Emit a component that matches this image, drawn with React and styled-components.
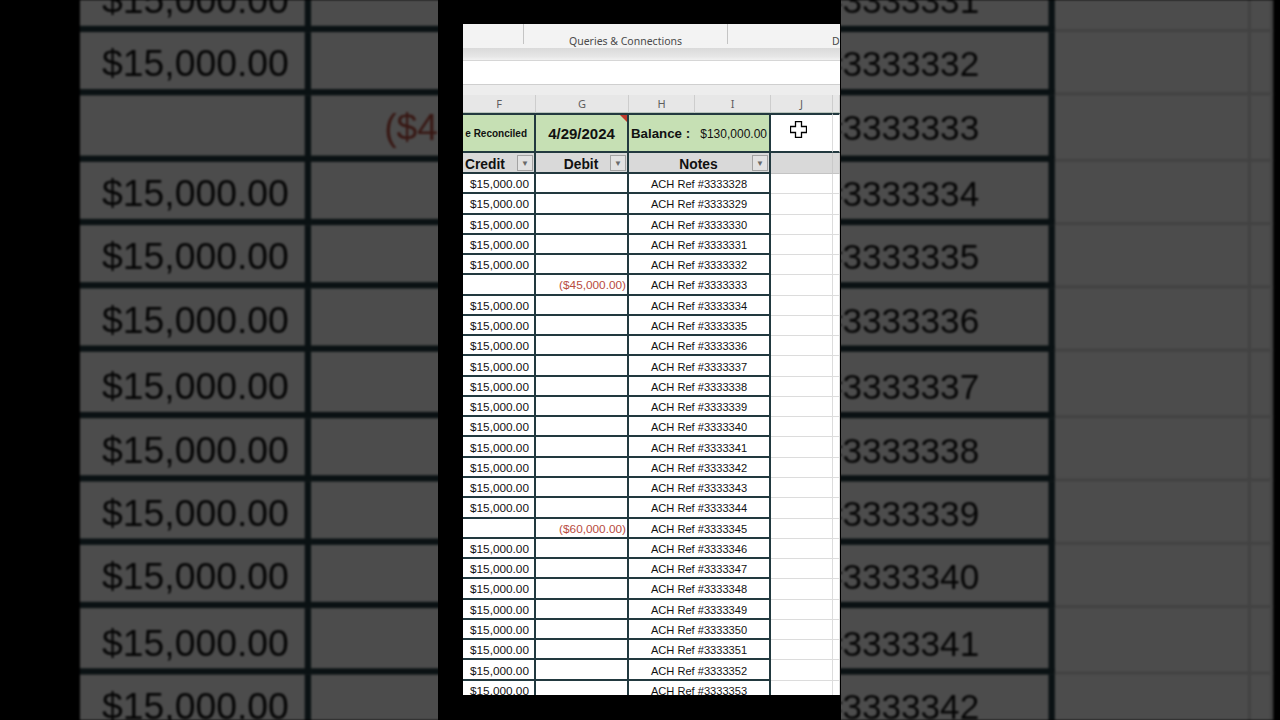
import styled, { createGlobalStyle } from 'styled-components'

const INK = '#22393f'
const GREEN = '#c6e0b4'
const GRID = '#dcdcdc'
const COLS = '73px 93px 66px 76px 62px 7px'

const GlobalStyle = createGlobalStyle`
  html, body {
    margin: 0;
    background: #000;
  }
  * {
    box-sizing: border-box;
  }
`

const Stage = styled.div`
  display: grid;
  width: 1280px;
  height: 720px;
  overflow: hidden;
  background: #000;
`

// blurred, darkened close-up of the same sheet behind the portrait frame
const BackdropLayer = styled.div`
  grid-area: 1 / 1;
  overflow: hidden;
  filter: brightness(0.3) blur(1.2px);
`

const Zoomed = styled.div`
  width: 377px;
  transform-origin: 0 0;
  transform: translate(80px, -699px) scale(3.165);
`

const FrontLayer = styled.div`
  grid-area: 1 / 1;
  z-index: 1;
  display: flex;
  padding-left: 438px;
`

const Frame = styled.div`
  width: 403px;
  height: 720px;
  background: #000;
  padding: 24px 0 0 25px;
`

const SheetBox = styled.div`
  width: 377px;
  height: 671px;
  overflow: hidden;
  background: #fff;
  font-family: "Liberation Sans", Arial, sans-serif;
  color: #111;
`

const Ribbon = styled.div`
  display: grid;
  grid-template-columns: 61px 204px 1fr;
  height: 24px;
  background: #f3f3f3;
`

const RibbonGroup = styled.div`
  display: flex;
  align-items: flex-end;
  justify-content: ${p => (p.$start ? 'flex-start' : 'center')};
  height: 20px;
  padding-left: ${p => (p.$start ? '104px' : '0')};
  border-right: ${p => (p.$last ? 'none' : '1px solid #c4c4c4')};
`

const RibbonLabel = styled.span`
  margin-bottom: -3px;
  font-family: "Noto Sans", "Open Sans", sans-serif;
  font-size: 10.5px;
  line-height: 12px;
  color: #4a4a4a;
  white-space: nowrap;
`

const RibbonShade = styled.div`
  height: 12px;
  background: linear-gradient(#dadada, #e6e6e6 70%, #f2f2f2);
`

const FormulaBar = styled.div`
  height: 24px;
  background: #fff;
  border-top: 1px solid #d6d6d6;
`

const GapBand = styled.div`
  height: 11px;
  background: #ededed;
  border-top: 1px solid #cfcfcf;
`

const Row = styled.div`
  display: grid;
  grid-template-columns: ${COLS};
  height: ${p => p.$h}px;
`

const ColLetter = styled.div`
  display: flex;
  align-items: center;
  justify-content: center;
  background: #e7e7e7;
  border-right: 1px solid #cdcdcd;
  border-bottom: 1px solid #b9c4bc;
  font-family: "Noto Sans", "Open Sans", sans-serif;
  font-size: 11px;
  color: #5e5e5e;
`

const TitleCell = styled.div`
  position: relative;
  display: flex;
  align-items: center;
  justify-content: ${p => p.$justify || 'center'};
  grid-column: span ${p => p.$span || 1};
  padding: 1px 2px 0;
  background: ${p => (p.$plain ? '#fff' : GREEN)};
  border-top: 2px solid ${INK};
  border-bottom: 2px solid ${INK};
  border-right: ${p => (p.$plain ? `1px solid ${GRID}` : `2px solid ${INK}`)};
  overflow: hidden;
  white-space: nowrap;
`

const SmallBold = styled.span`
  padding-right: 5px;
  font-size: 10px;
  font-weight: 700;
`

const DateText = styled.span`
  font-size: 15px;
  font-weight: 700;
`

const BalanceLabel = styled.span`
  font-size: 13.3px;
  font-weight: 700;
`

const BalanceValue = styled.span`
  font-size: 12px;
`

const CommentMark = styled.span`
  position: absolute;
  top: 0;
  right: 0;
  border-top: 7px solid #c0392b;
  border-left: 7px solid transparent;
`

const Cursor = styled.svg`
  position: absolute;
  left: 19px;
  top: 6px;
`

const HeadCell = styled.div`
  display: flex;
  align-items: center;
  grid-column: span ${p => p.$span || 1};
  padding-top: 1px;
  padding-left: ${p => (p.$left ? '2px' : '0')};
  background: #d9d9d9;
  border-bottom: ${p => (p.$plain ? `1px solid #c4c4c4` : `2px solid ${INK}`)};
  border-right: ${p => (p.$plain ? `1px solid #c9c9c9` : `2px solid ${INK}`)};
`

const HeadTitle = styled.span`
  flex: 1;
  padding-top: 2px;
  padding-left: ${p => (p.$left ? '0' : '16px')};
  text-align: ${p => (p.$left ? 'left' : 'center')};
  font-size: 13.8px;
  font-weight: 700;
`

const FilterButton = styled.span`
  display: flex;
  align-items: center;
  justify-content: center;
  width: 16px;
  height: 16px;
  margin-right: 1px;
  background: #e2e2e2;
  border: 1px solid #a3a3a3;
  font-size: 8px;
  color: #6a6a6a;
`

const DataCell = styled.div`
  display: flex;
  align-items: center;
  justify-content: ${p => p.$justify || 'flex-end'};
  grid-column: span ${p => p.$span || 1};
  padding-top: 2px;
  padding-right: ${p => p.$pad || 0}px;
  border-right: 2px solid ${INK};
  border-bottom: 2px solid ${INK};
  font-size: ${p => p.$size || 11.8}px;
  color: ${p => (p.$red ? '#b84c3e' : '#111')};
  white-space: nowrap;
`

const BlankCell = styled.div`
  border-right: 1px solid ${GRID};
  border-bottom: 1px solid ${GRID};
`

const entries = Array.from({ length: 26 }, (_, i) => {
  const ref = 3333328 + i
  const debit = ref === 3333333 ? '($45,000.00)' : ref === 3333345 ? '($60,000.00)' : null
  return { ref, debit }
})

const Sheet = () => (
  <SheetBox>
    <Ribbon>
      <RibbonGroup />
      <RibbonGroup>
        <RibbonLabel>Queries &amp; Connections</RibbonLabel>
      </RibbonGroup>
      <RibbonGroup $start $last>
        <RibbonLabel>D</RibbonLabel>
      </RibbonGroup>
    </Ribbon>
    <RibbonShade />
    <FormulaBar />
    <GapBand />

    <Row $h={18}>
      {['F', 'G', 'H', 'I', 'J', ''].map((c, i) => (
        <ColLetter key={i}>{c}</ColLetter>
      ))}
    </Row>

    <Row $h={40}>
      <TitleCell $justify="flex-end">
        <SmallBold>e Reconciled</SmallBold>
      </TitleCell>
      <TitleCell>
        <DateText>4/29/2024</DateText>
        <CommentMark />
      </TitleCell>
      <TitleCell $span={2} $justify="space-between">
        <BalanceLabel>Balance :</BalanceLabel>
        <BalanceValue>$130,000.00</BalanceValue>
      </TitleCell>
      <TitleCell $plain>
        <Cursor width="17" height="17" viewBox="0 0 17 17">
          <path
            d="M5.5 0.5h6v5h5v6h-5v5h-6v-5h-5v-6h5z"
            fill="#fff"
            stroke="#000"
            strokeWidth="1.3"
          />
        </Cursor>
      </TitleCell>
      <TitleCell $plain />
    </Row>

    <Row $h={21}>
      <HeadCell $left>
        <HeadTitle $left>Credit</HeadTitle>
        <FilterButton>▼</FilterButton>
      </HeadCell>
      <HeadCell>
        <HeadTitle>Debit</HeadTitle>
        <FilterButton>▼</FilterButton>
      </HeadCell>
      <HeadCell $span={2}>
        <HeadTitle>Notes</HeadTitle>
        <FilterButton>▼</FilterButton>
      </HeadCell>
      <HeadCell $plain />
      <HeadCell $plain />
    </Row>

    {entries.map(({ ref, debit }) => (
      <Row key={ref} $h={20.28}>
        <DataCell $pad={5}>{debit ? '' : '$15,000.00'}</DataCell>
        <DataCell $pad={1} $red>{debit || ''}</DataCell>
        <DataCell $span={2} $justify="center" $size={11.1}>
          ACH Ref #{ref}
        </DataCell>
        <BlankCell />
        <BlankCell />
      </Row>
    ))}
  </SheetBox>
)

const App = () => (
  <Stage>
    <GlobalStyle />
    <BackdropLayer aria-hidden="true">
      <Zoomed>
        <Sheet />
      </Zoomed>
    </BackdropLayer>
    <FrontLayer>
      <Frame>
        <Sheet />
      </Frame>
    </FrontLayer>
  </Stage>
)

export default App
